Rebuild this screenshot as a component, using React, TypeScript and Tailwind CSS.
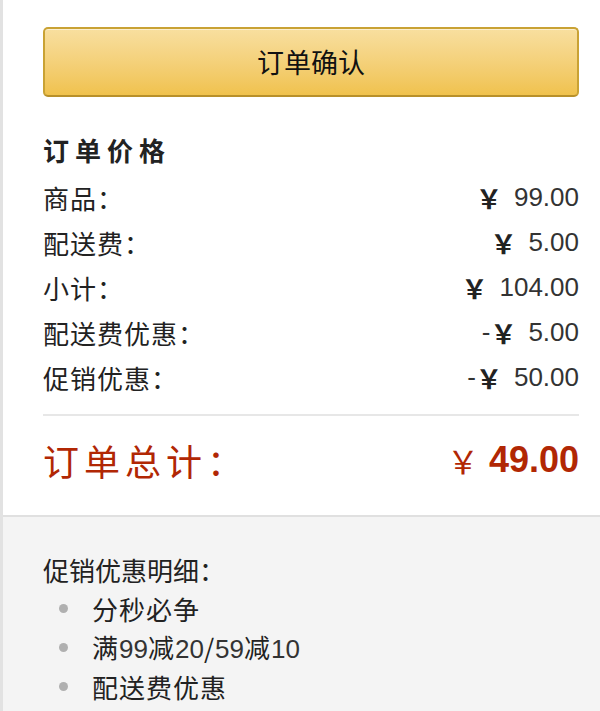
const rows = [
  { label: "商品：", sign: "", amount: "99.00" },
  { label: "配送费：", sign: "", amount: "5.00" },
  { label: "小计：", sign: "", amount: "104.00" },
  { label: "配送费优惠：", sign: "-", amount: "5.00" },
  { label: "促销优惠：", sign: "-", amount: "50.00" },
];

const promos = ["分秒必争", "满99减20/59减10", "配送费优惠"];

const cjk = "font-['Noto_Sans_CJK_SC',sans-serif]";

export default function App() {
  return (
    <div className={`w-[600px] h-[711px] flex flex-col border-l-[3px] border-[#e2e2e2] text-[#333] ${cjk}`}>
      <div className="bg-white pt-[27px] pl-[40px] pr-[21px] pb-[25px]">
        <button className="w-full h-[70px] rounded-[5px] border-2 border-[#c9a234] border-b-[#b8902a] bg-gradient-to-b from-[#f8df9f] to-[#f0c24d] text-[27px] text-[#111] shadow-[inset_0_1px_0_rgba(255,255,255,0.5)]">
          订单确认
        </button>

        <h2 className="mt-[36px] text-[26px] leading-[34px] font-bold tracking-[6px] text-[#222]">
          订单价格
        </h2>

        <div className="mt-[8px] flex flex-col">
          {rows.map((r) => (
            <div key={r.label} className="flex items-center justify-between h-[45px]">
              <span className="text-[26px] tracking-[1px] text-[#222]">{r.label}</span>
              <span className="flex items-center">
                <span className="text-[26px] text-[#333] font-['Liberation_Sans',sans-serif]">{r.sign}</span>
                <span className="text-[26px] font-bold text-[#222]">￥</span>
                <span className="ml-[12px] text-[26px] text-[#333] font-['Liberation_Sans',sans-serif]">{r.amount}</span>
              </span>
            </div>
          ))}
        </div>

        <div className="mt-[14px] h-[2px] bg-[#e7e7e7]" />

        <div className="mt-[14px] flex items-center justify-between h-[60px] text-[#b12704]">
          <span className="text-[36px] tracking-[5px]">订单总计：</span>
          <span className="flex items-center">
            <span className="text-[32px]">￥</span>
            <span className="ml-[10px] text-[36px] font-bold font-['Liberation_Sans',sans-serif]">49.00</span>
          </span>
        </div>
      </div>

      <div className="flex-1 bg-[#f4f4f4] border-t-2 border-[#e0e0e0] pl-[40px] pt-[33px]">
        <div className="h-[39px] flex items-center text-[26px] text-[#222]">
          促销优惠明细：
        </div>
        <ul className="flex flex-col">
          {promos.map((p) => (
            <li key={p} className="h-[39px] flex items-center">
              <span className="ml-[16px] w-[9px] h-[9px] rounded-full bg-[#b0b0b0]" />
              <span className="ml-[24px] text-[26px] tracking-[1px] text-[#222]">
                {p.split(/(\d+)/).map((part, i) =>
                  /^\d+$/.test(part) ? (
                    <span key={i} className="font-['Liberation_Sans',sans-serif] text-[26px] tracking-normal text-[#333]">{part}</span>
                  ) : (
                    <span key={i}>{part}</span>
                  )
                )}
              </span>
            </li>
          ))}
        </ul>
      </div>
    </div>
  );
}
